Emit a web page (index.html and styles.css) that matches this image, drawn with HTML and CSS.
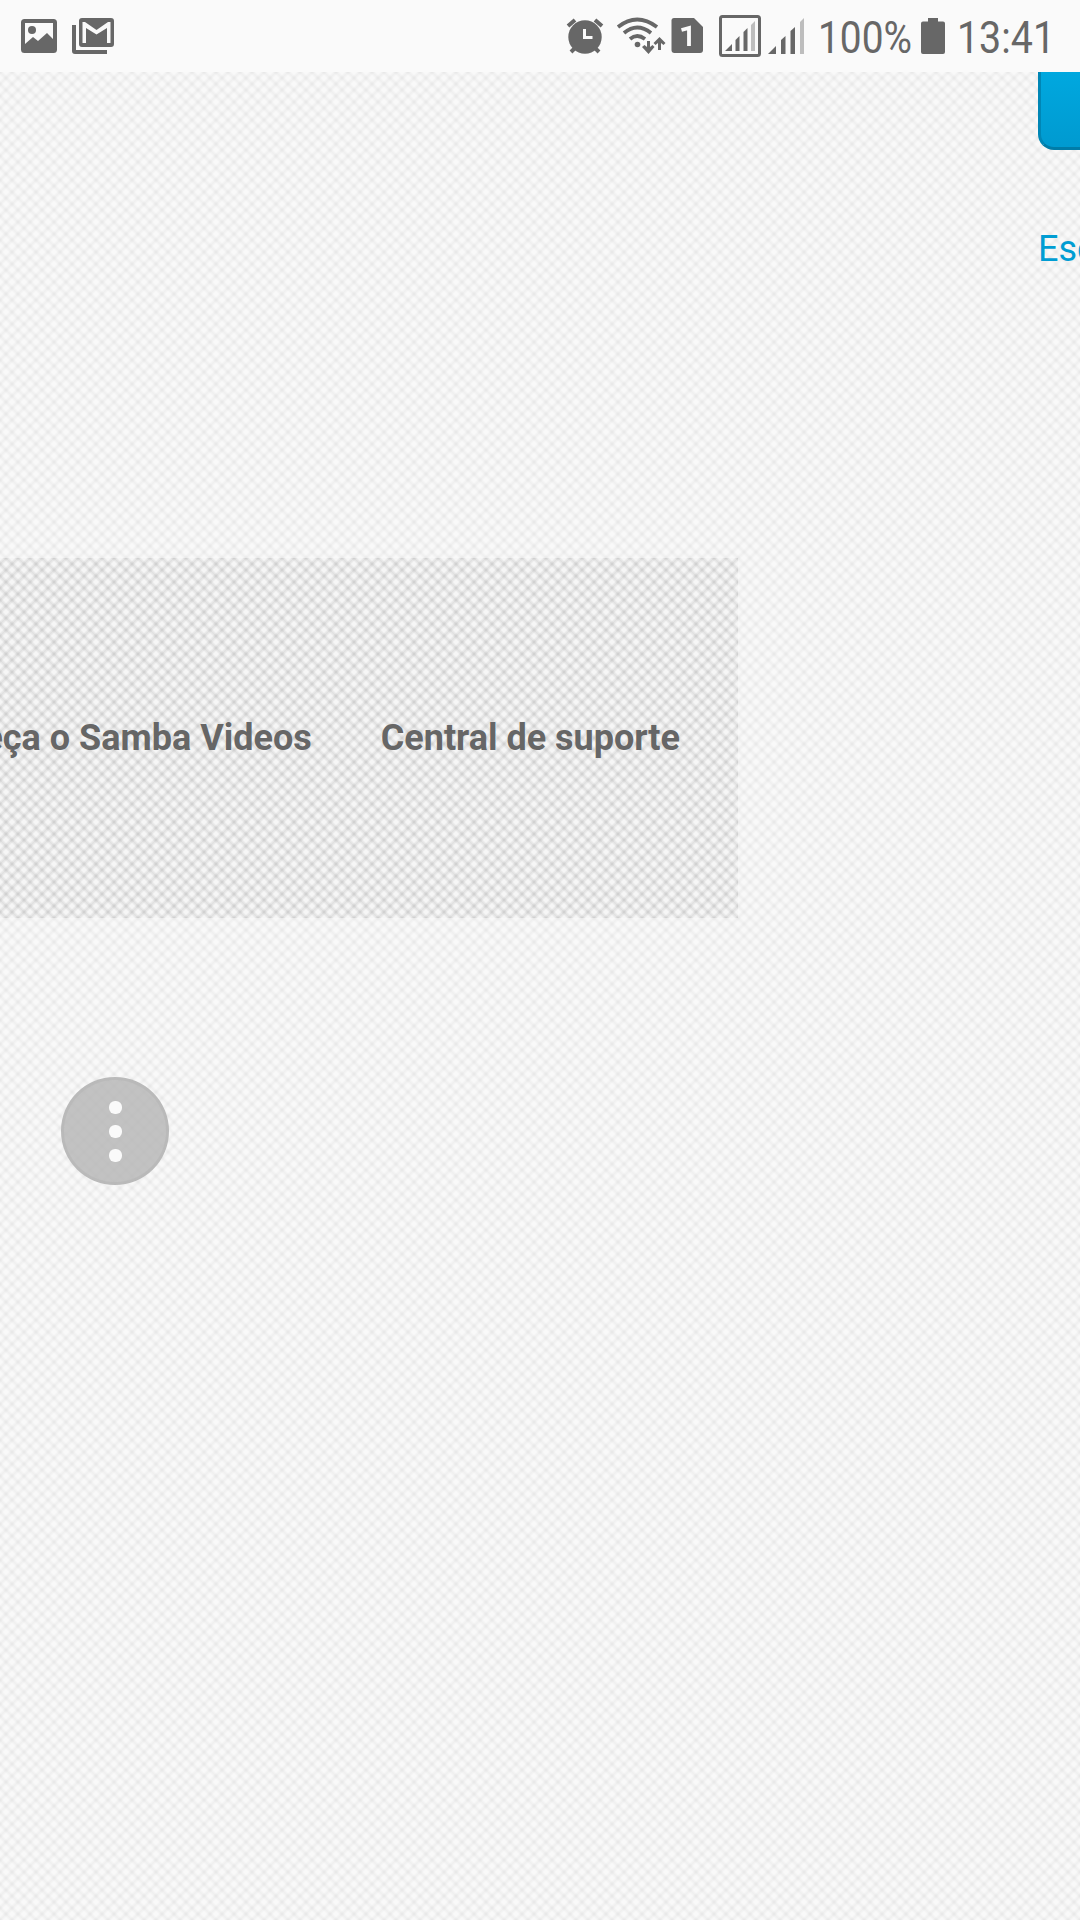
FILE: index.html
```html
<!DOCTYPE html>
<html lang="pt-BR">
<head>
<meta charset="utf-8">
<title>Samba Videos</title>
<link rel="stylesheet" href="styles.css">
</head>
<body>
<header class="status">
<svg class="status-icons" width="1080" height="72" viewBox="0 0 1080 72" fill="#676767">
  <path fill-rule="evenodd" d="M24.500 19H53.500Q57 19 57 22.500V49.500Q57 53 53.500 53H24.500Q21 53 21 49.500V22.500Q21 19 24.500 19ZM25 23V44L33 37L38 41L47 33L53 39V23Z"/>
  <circle cx="32" cy="30" r="4"/>
  <path d="M72 25H76V50H107V54H75Q72 54 72 51Z"/>
  <path fill-rule="evenodd" d="M82 18H111Q114 18 114 21V44Q114 47 111 47H82Q79 47 79 44V21Q79 18 82 18ZM82.500 22V43H86V28L96.500 34.500L107 28V43H110.500V22H108L96.500 30L85 22Z"/>
  <circle cx="585" cy="37" r="16.700"/>
  <path d="M568 26L575 20M602 26L595 20M571 52L576 47M599 52L594 47" stroke="#676767" stroke-width="4"/>
  <path d="M584.500 29V37.500H592.500" fill="none" stroke="#fafafa" stroke-width="3"/>
  <path d="M618 27Q637 12 657 27M624 33Q637 22 651 33M630 39Q637 33 645 39" fill="none" stroke="#676767" stroke-width="3.800"/>
  <circle cx="637.500" cy="44.500" r="2.800"/>
  <path d="M647 41H650V47L652.500 45L654.500 47L648.500 54L642 47L644.500 45L647 47ZM658 50V43L655.500 45L653.500 43L659.500 37L665.500 43L663.500 45L661 43V50Z"/>
  <path d="M674 18H694L703 27V50Q703 53 700 53H674.500Q671.500 53 671.500 50V20.500Q671.500 18 674 18Z"/>
  <path d="M681.500 30L689 28V46" fill="none" stroke="#fafafa" stroke-width="3.800"/>
  <rect x="720.500" y="16.500" width="39" height="39" rx="2" fill="none" stroke="#676767" stroke-width="3"/>
  <path d="M725 51L732 44V51ZM735.500 51V40L739.500 36V51ZM743.500 51V32L747.500 28V51Z"/><path fill="#bdbdbd" d="M751 51V25L755 21V51Z"/>
  <path d="M768 54L776 46V54ZM781 54V40L785.500 36V54ZM790.500 54V31L795 27V54Z"/><path fill="#bdbdbd" d="M800 54V22L804 18V54Z"/>
  <text class="reading" x="818" y="53" textLength="94" lengthAdjust="spacingAndGlyphs">100%</text>
  <path d="M928 18H938V21.500H943Q945 21.500 945 23.500V52Q945 54 943 54H923Q921 54 921 52V23.500Q921 21.500 923 21.500H928Z"/>
  <text class="reading" x="957" y="53" textLength="98" lengthAdjust="spacingAndGlyphs">13:41</text>
</svg>
</header>
<main class="page">
  <section class="login">
    <button class="submit" aria-label="Entrar"></button>
    <a class="forgot">Esqueci minha senha</a>
  </section>
  <nav class="links"><a>Conheça o Samba Videos</a><a>Central de suporte</a></nav>
</main>
<div class="more"><i></i><i></i><i></i></div>
</body>
</html>
```
FILE: styles.css
```css
* { box-sizing: border-box; }
body {
  margin: 0;
  width: 1080px;
  height: 1920px;
  overflow: hidden;
  font-family: Roboto, sans-serif;
  font-size: 36px;
  background: #f5f5f5;
}
.status { height: 72px; background: #fafafa; }
.status-icons { display: block; }
.reading { font: 45px Roboto, sans-serif; }
.page,
.links {
  --weave: rgba(0,0,0,.035);
  background-image:
    linear-gradient(45deg, var(--weave), transparent 17% 33%, var(--weave) 50%, transparent 67% 83%, var(--weave)),
    linear-gradient(-45deg, var(--weave), transparent 17% 33%, var(--weave) 50%, transparent 67% 83%, var(--weave));
  background-size: 12px 12px;
}
.page {
  height: 1848px;
  overflow: hidden;
  background-color: #f9f9f9;
}
.login {
  display: flex;
  flex-direction: column;
  height: 486px;
  padding-left: 1038px;
}
.submit {
  width: 300px;
  height: 78px;
  border: 3px solid #0086b5;
  border-top: 0;
  border-bottom-color: #007ca8;
  border-radius: 0 0 16px 16px;
  background: linear-gradient(#00a8df, #009ad0);
}
.forgot {
  margin-top: 78px;
  line-height: 42px;
  white-space: nowrap;
  color: #009dd3;
}
.links {
  --weave: rgba(0,0,0,.05);
  display: flex;
  justify-content: flex-end;
  align-items: center;
  gap: 69px;
  width: 738px;
  height: 360px;
  padding-right: 58px;
  background-color: rgba(0,0,0,.01);
  background-position: 0 6px;
  color: #666;
  font-weight: 700;
  white-space: nowrap;
}
.more {
  position: absolute;
  left: 61px;
  top: 1077px;
  display: flex;
  flex-direction: column;
  align-items: center;
  justify-content: center;
  gap: 11px;
  width: 108px;
  height: 108px;
  border: 3px solid rgba(182,182,182,.6);
  border-radius: 50%;
  background: rgba(180,180,180,.8);
}
.more i { width: 13px; height: 13px; border-radius: 6px; background: #fafafa; }
```
